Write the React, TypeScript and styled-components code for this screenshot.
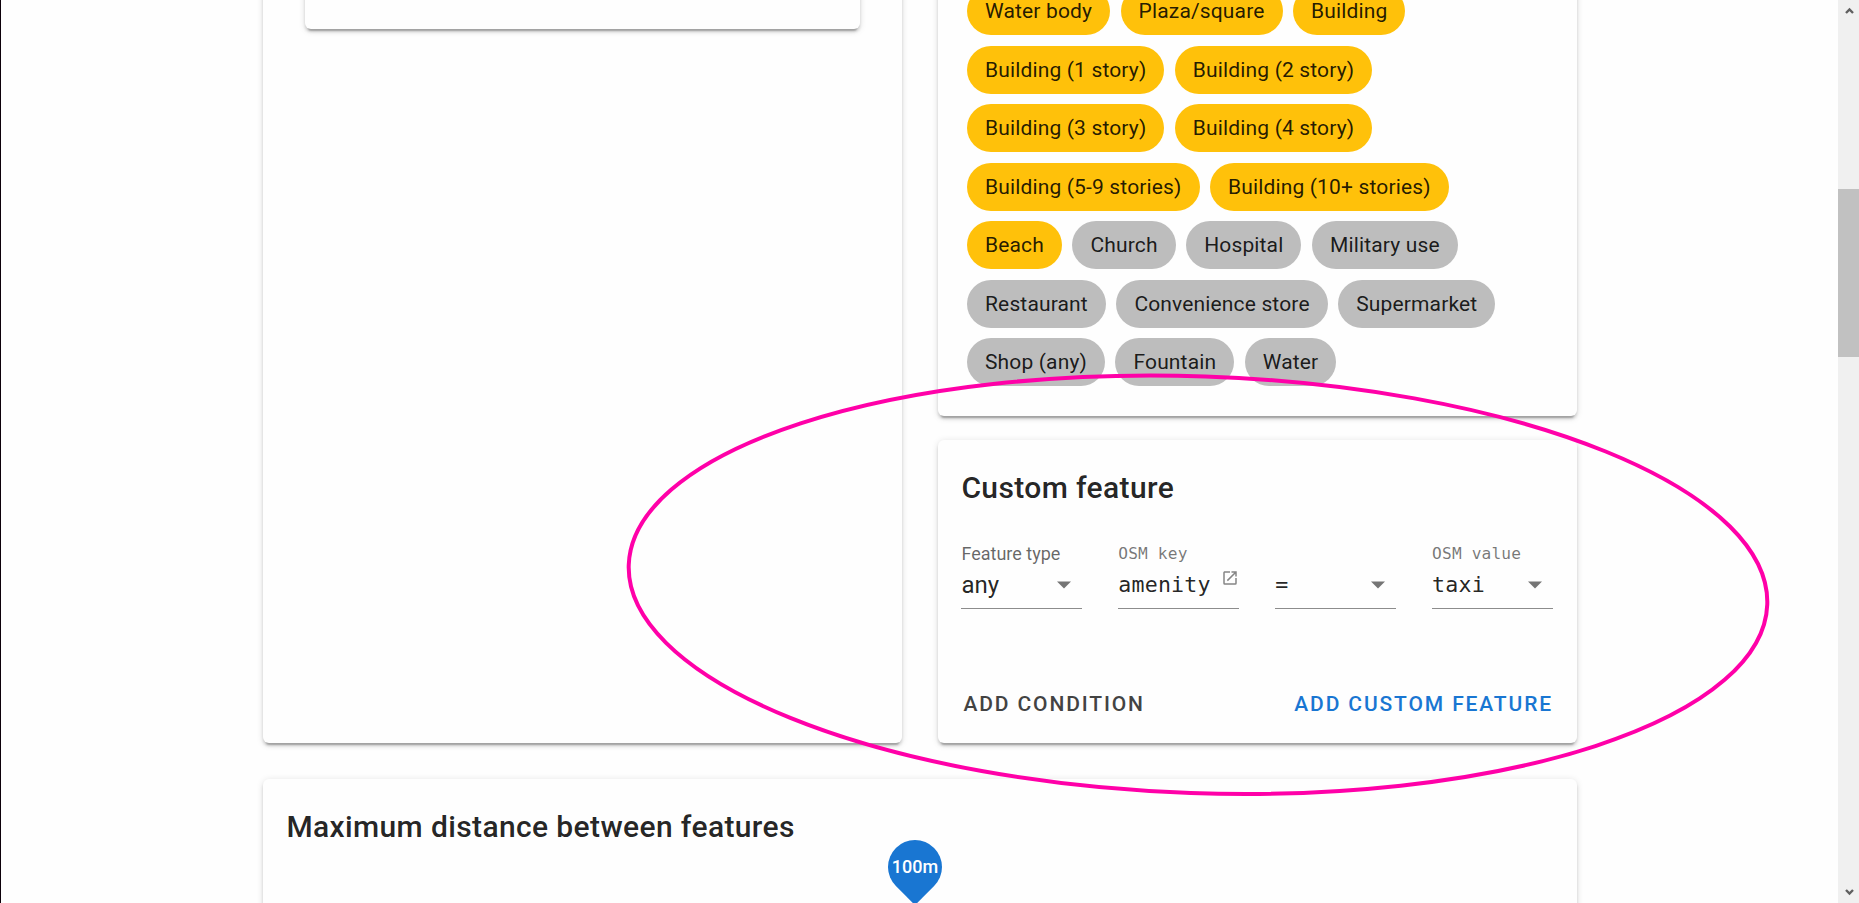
import React from "react";
import styled, { createGlobalStyle } from "styled-components";

const GlobalStyle = createGlobalStyle`
  html, body { margin: 0; padding: 0; overflow: hidden; background: #fefefe; }
  * { box-sizing: border-box; }
  body { font-family: Roboto, "Liberation Sans", sans-serif; color: rgba(0, 0, 0, 0.87); }
`;

const Window = styled.div`
  position: relative;
  display: flex;
  width: 1859px;
  height: 903px;
  overflow: hidden;
  border-left: 1px solid #0c000a;
`;

const Content = styled.main`
  flex: 1;
  padding-left: 262px;
  height: 903px;
  overflow: hidden;
`;

const Card = styled.section`
  background: #fefefe;
  border-radius: 6px;
  box-shadow:
    0 4.5px 1.5px -3px rgba(0, 0, 0, 0.2),
    0 3px 3px 0 rgba(0, 0, 0, 0.14),
    0 1.5px 7.5px 0 rgba(0, 0, 0, 0.12);
`;

const Columns = styled.div`
  display: flex;
  gap: 36px;
  width: 1314px;
  height: 793px;
  margin-top: -50px;
`;

const PresetCard = styled(Card)`
  width: 639px;
  padding: 0 42px;
`;

const InnerCard = styled(Card)`
  height: 79px;
`;

const RightColumn = styled.div`
  display: flex;
  flex-direction: column;
  gap: 24px;
  width: 639px;
`;

const ChipCard = styled(Card)`
  height: 466px;
  padding: 37.2px 0 0 29px;
`;

const ChipList = styled.div`
  display: flex;
  flex-wrap: wrap;
  gap: 10.5px;
  width: 574px;
`;

const Chip = styled.span<{ $active?: boolean }>`
  height: 48px;
  padding: 0 18px;
  border-radius: 24px;
  font-size: 21px;
  line-height: 48px;
  letter-spacing: 0.15px;
  white-space: nowrap;
  background: ${(p) => (p.$active ? "#ffc10a" : "#bdbdbd")};
`;

const CustomCard = styled(Card)`
  display: flex;
  flex-direction: column;
  height: 303px;
  padding: 24px 24px 24px 23.4px;
`;

const Title = styled.h2`
  margin: 0;
  font-size: 30px;
  font-weight: 500;
  line-height: 48px;
  letter-spacing: 0.375px;
`;

const Fields = styled.div`
  display: grid;
  grid-template-columns: repeat(4, 1fr);
  gap: 36px;
  margin-top: 28px;
`;

const Field = styled.div`
  display: flex;
  flex-direction: column;
  height: 69px;
  border-bottom: 1px solid #8c8c8c;
`;

const Label = styled.label<{ $code?: boolean }>`
  height: 27px;
  line-height: ${(p) => (p.$code ? "28px" : "27px")};
  color: ${(p) => (p.$code ? "rgba(0, 0, 0, 0.54)" : "rgba(0, 0, 0, 0.6)")};
  white-space: pre;
  font-family: ${(p) => (p.$code ? '"DejaVu Sans Mono", monospace' : "inherit")};
  font-size: ${(p) => (p.$code ? "16.2px" : "18px")};
  letter-spacing: ${(p) => (p.$code ? "0.15px" : "0")};
`;

const ValueRow = styled.div`
  display: flex;
  justify-content: space-between;
  height: 36px;
  line-height: 36px;
`;

const Value = styled.span<{ $code?: boolean }>`
  font-family: ${(p) => (p.$code ? '"DejaVu Sans Mono", monospace' : "inherit")};
  font-size: ${(p) => (p.$code ? "21.6px" : "24px")};
  letter-spacing: ${(p) => (p.$code ? "0.2px" : "0")};
`;

const Arrow = styled.svg`
  width: 14px;
  height: 8px;
  margin: 14px 11px 0 0;
`;

const LinkIcon = styled.svg`
  width: 18px;
  height: 18px;
  margin: 2px 0 0;
`;

const Actions = styled.div`
  display: flex;
  justify-content: space-between;
  margin-top: 68px;
  padding: 0 0 0 2px;
`;

const TextButton = styled.button<{ $primary?: boolean }>`
  padding: 0;
  border: 0;
  background: none;
  font: 500 21px/54px Roboto, sans-serif;
  letter-spacing: 1.875px;
  text-transform: uppercase;
  color: ${(p) => (p.$primary ? "#1976d2" : "#434343")};
`;

const DistanceCard = styled(Card)`
  position: relative;
  width: 1314px;
  height: 200px;
  margin-top: 36px;
  padding: 24px 23.4px;
`;

const ThumbLabel = styled.div`
  position: absolute;
  left: 625px;
  top: 61px;
  width: 54px;
  height: 54px;
`;

const ThumbDrop = styled.div`
  width: 54px;
  height: 54px;
  border-radius: 50% 50% 0 50%;
  background: #1976d2;
  transform: rotate(45deg);
`;

const ThumbText = styled.span`
  position: absolute;
  inset: 0;
  color: #fff;
  font-size: 18px;
  font-weight: 500;
  line-height: 53px;
  text-align: center;
`;

const Scrollbar = styled.aside`
  display: flex;
  flex-direction: column;
  justify-content: space-between;
  align-items: center;
  width: 21px;
  height: 903px;
  background: #f0f0f0;
`;

const Thumb = styled.div`
  width: 21px;
  height: 168px;
  margin: 172px 0 auto;
  background: #c1c1c1;
`;

const ScrollArrow = styled.svg`
  width: 21px;
  height: 17px;
  flex: none;
`;

const Highlight = styled.svg`
  position: absolute;
  left: -1px;
  top: 0;
  pointer-events: none;
`;

const chips: [string, boolean][] = [
  ["Water body", true],
  ["Plaza/square", true],
  ["Building", true],
  ["Building (1 story)", true],
  ["Building (2 story)", true],
  ["Building (3 story)", true],
  ["Building (4 story)", true],
  ["Building (5-9 stories)", true],
  ["Building (10+ stories)", true],
  ["Beach", true],
  ["Church", false],
  ["Hospital", false],
  ["Military use", false],
  ["Restaurant", false],
  ["Convenience store", false],
  ["Supermarket", false],
  ["Shop (any)", false],
  ["Fountain", false],
  ["Water", false],
];

const DropArrow = () => (
  <Arrow viewBox="0 0 14 8">
    <path d="M0 0.5h14l-7 7z" fill="#757575" />
  </Arrow>
);

export default function App() {
  return (
    <>
      <GlobalStyle />
      <Window>
        <Content>
          <Columns>
            <PresetCard>
              <InnerCard />
            </PresetCard>
            <RightColumn>
              <ChipCard>
                <ChipList>
                  {chips.map(([name, active]) => (
                    <Chip key={name} $active={active}>{name}</Chip>
                  ))}
                </ChipList>
              </ChipCard>
              <CustomCard>
                <Title>Custom feature</Title>
                <Fields>
                  <Field>
                    <Label>Feature type</Label>
                    <ValueRow><Value>any</Value><DropArrow /></ValueRow>
                  </Field>
                  <Field>
                    <Label $code>OSM key</Label>
                    <ValueRow>
                      <Value $code>amenity</Value>
                      <LinkIcon viewBox="0 0 24 24">
                        <path
                          fill="#858585"
                          d="M14 3v2h3.59l-9.83 9.83 1.41 1.41L19 6.41V10h2V3m-2 16H5V5h7V3H5c-1.11 0-2 .9-2 2v14a2 2 0 0 0 2 2h14a2 2 0 0 0 2-2v-7h-2z"
                        />
                      </LinkIcon>
                    </ValueRow>
                  </Field>
                  <Field>
                    <Label />
                    <ValueRow><Value $code>=</Value><DropArrow /></ValueRow>
                  </Field>
                  <Field>
                    <Label $code>OSM value</Label>
                    <ValueRow><Value $code>taxi</Value><DropArrow /></ValueRow>
                  </Field>
                </Fields>
                <Actions>
                  <TextButton>Add condition</TextButton>
                  <TextButton $primary>Add custom feature</TextButton>
                </Actions>
              </CustomCard>
            </RightColumn>
          </Columns>
          <DistanceCard>
            <Title>Maximum distance between features</Title>
            <ThumbLabel>
              <ThumbDrop />
              <ThumbText>100m</ThumbText>
            </ThumbLabel>
          </DistanceCard>
        </Content>
        <Scrollbar>
          <ScrollArrow viewBox="0 0 21 17">
            <path d="M8 13l3.5-3.5L15 13" fill="none" stroke="#606060" strokeWidth="2.4" />
          </ScrollArrow>
          <Thumb />
          <ScrollArrow viewBox="0 0 21 17">
            <path d="M8 4l3.5 3.5L15 4" fill="none" stroke="#606060" strokeWidth="2.4" />
          </ScrollArrow>
        </Scrollbar>
        <Highlight width="1859" height="903">
          <ellipse
            cx="1198"
            cy="584.7"
            rx="569.6"
            ry="208.4"
            transform="rotate(2 1198 584.7)"
            fill="none"
            stroke="#ff00a8"
            strokeWidth="4"
          />
        </Highlight>
      </Window>
    </>
  );
}
